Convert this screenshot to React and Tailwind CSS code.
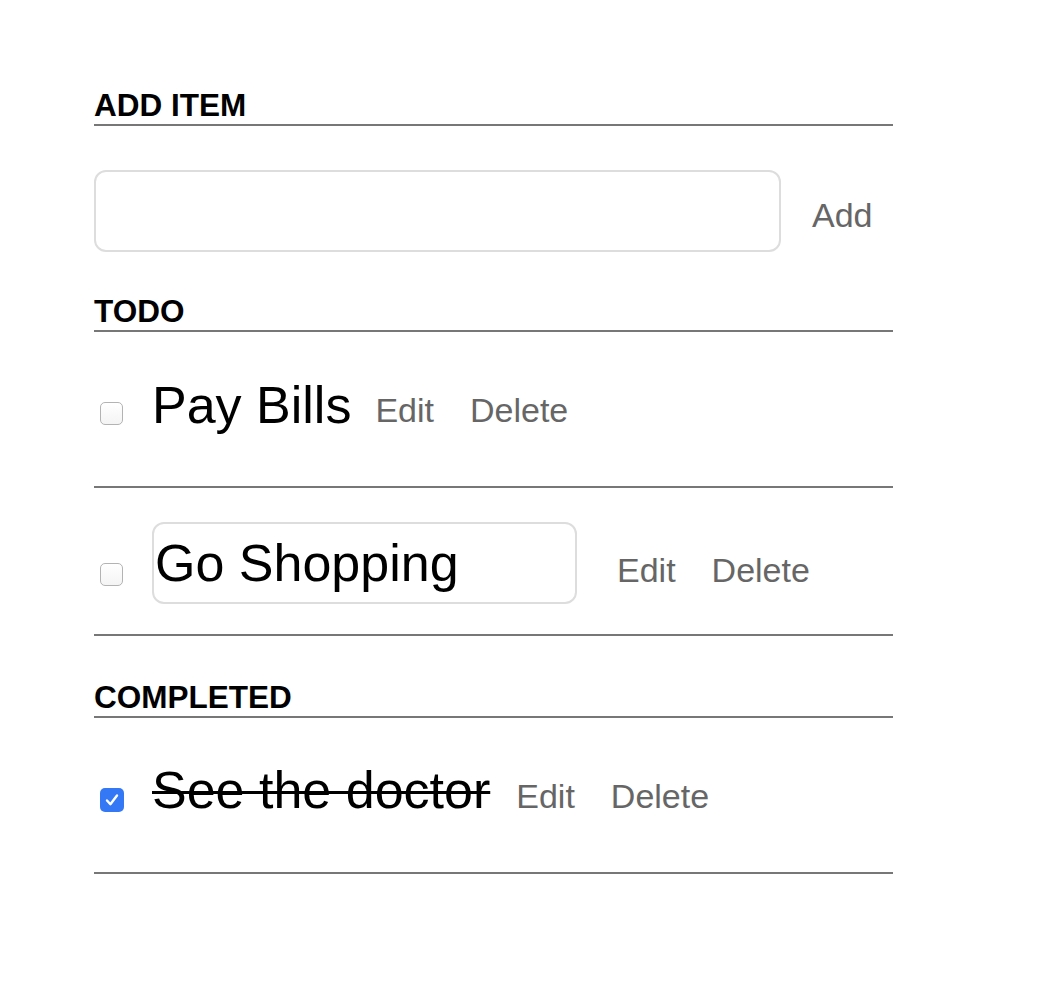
import { useState } from "react";

const font = { fontFamily: '"Liberation Sans", Arial, Helvetica, sans-serif' };

function Heading({ children, className = "" }) {
  return (
    <h3
      className={
        "text-[31.5px] leading-[36px] font-bold text-black border-b-2 border-[#777777] pb-[1px] " +
        className
      }
    >
      {children}
    </h3>
  );
}

function Box({ checked, className = "" }) {
  if (checked) {
    return (
      <span
        className={
          "flex h-[24px] w-[24px] shrink-0 items-center justify-center rounded-[5px] bg-[#3478f6] " +
          className
        }
      >
        <svg width="18" height="18" viewBox="0 0 18 18" fill="none">
          <path
            d="M4 9.5 L7.4 13.2 L14 4.5"
            stroke="white"
            strokeWidth="2.4"
            strokeLinecap="round"
            strokeLinejoin="round"
          />
        </svg>
      </span>
    );
  }
  return (
    <span
      className={
        "block h-[23px] w-[23px] shrink-0 rounded-[5px] border border-[#b3b3b3] bg-gradient-to-b from-white to-[#f4f4f4] " +
        className
      }
    />
  );
}

function ActionButtons({ editClass, top }) {
  return (
    <>
      <button className={"text-[34px] leading-[40px] text-[#666666] " + editClass + " " + top}>
        Edit
      </button>
      <button className={"text-[34px] leading-[40px] text-[#666666] ml-[36px] " + top}>
        Delete
      </button>
    </>
  );
}

export default function App() {
  const [newItem, setNewItem] = useState("");
  const [shopping, setShopping] = useState("Go Shopping");

  return (
    <div className="min-h-screen bg-white" style={font}>
      <div className="ml-[94px] w-[799px] pt-[87px]">
        <Heading>ADD ITEM</Heading>

        <div className="mt-[44px] flex items-start">
          <input
            type="text"
            value={newItem}
            onChange={(e) => setNewItem(e.target.value)}
            className="h-[82px] w-[687px] rounded-[12px] border-2 border-[#dddddd] px-3 text-[34px] outline-none"
          />
          <button className="ml-[31px] mt-[25px] text-[34px] leading-[40px] text-[#666666]">
            Add
          </button>
        </div>

        <Heading className="mt-[41px]">TODO</Heading>

        <ul>
          <li className="flex h-[156px] items-start border-b-2 border-[#777777]">
            <Box className="ml-[6px] mt-[70px]" />
            <span className="ml-[29px] mt-[43px] text-[52px] leading-[60px] text-black">
              Pay Bills
            </span>
            <ActionButtons editClass="ml-[24px]" top="mt-[58px]" />
          </li>

          <li className="flex h-[148px] items-start border-b-2 border-[#777777]">
            <Box className="ml-[6px] mt-[75px]" />
            <input
              type="text"
              value={shopping}
              onChange={(e) => setShopping(e.target.value)}
              className="ml-[29px] mt-[34px] h-[82px] w-[425px] rounded-[12px] border-2 border-[#dddddd] pl-[1px] text-[52px] text-black outline-none"
            />
            <ActionButtons editClass="ml-[40px]" top="mt-[62px]" />
          </li>
        </ul>

        <Heading className="mt-[43px]">COMPLETED</Heading>

        <ul>
          <li className="flex h-[156px] items-start border-b-2 border-[#777777]">
            <Box checked className="ml-[6px] mt-[70px]" />
            <span className="ml-[28px] mt-[42px] text-[52px] leading-[60px] text-black line-through decoration-[3px]">
              See the doctor
            </span>
            <ActionButtons editClass="ml-[26px]" top="mt-[58px]" />
          </li>
        </ul>
      </div>
    </div>
  );
}
